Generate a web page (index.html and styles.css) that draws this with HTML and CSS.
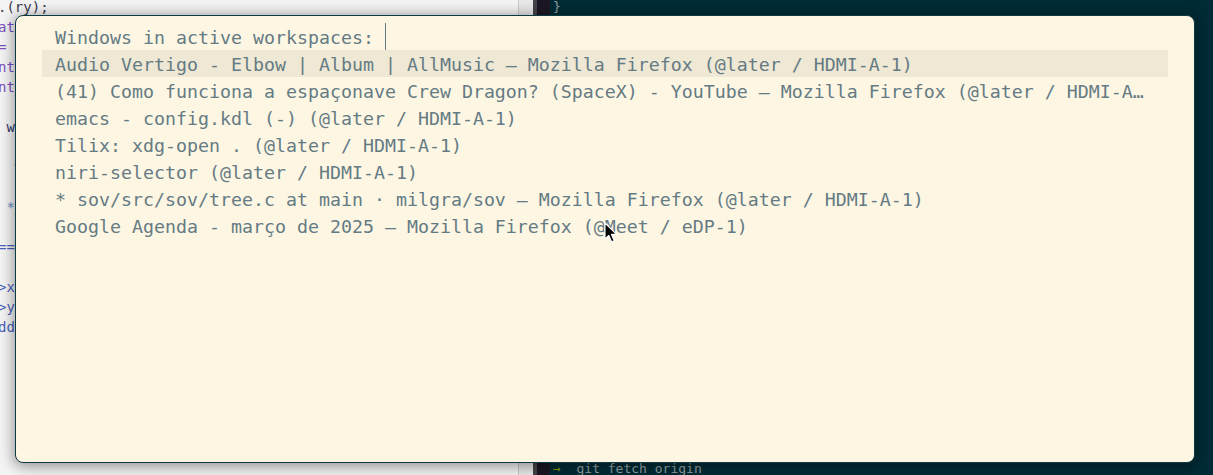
FILE: index.html
```html
<!DOCTYPE html>
<html>
<head>
<meta charset="utf-8">
<link rel="stylesheet" href="styles.css">
</head>
<body>
<div class="desktop">
  <div class="editor">
    <div class="code">
      <div class="ln dark">.(ry);</div>
      <div class="ln purple">at</div>
      <div class="ln purple">= a</div>
      <div class="ln purple">nt_</div>
      <div class="ln purple">nt_</div>
      <div class="ln"></div>
      <div class="ln navy">&nbsp;wi</div>
      <div class="ln"></div>
      <div class="ln dark">&nbsp;&nbsp;w</div>
      <div class="ln"></div>
      <div class="ln light">&nbsp;*</div>
      <div class="ln"></div>
      <div class="ln blue">==</div>
      <div class="ln"></div>
      <div class="ln blue">&gt;x</div>
      <div class="ln blue">&gt;y</div>
      <div class="ln blue">ddo</div>
    </div>
    <div class="scrollbar"></div>
  </div>
  <div class="split"></div>
  <div class="terminal">
    <div class="tline">}</div>
    <div class="tline"><span class="arrow">→</span>  git fetch origin</div>
  </div>

  <div class="popup">
    <div class="prompt">Windows in active workspaces: <span class="caret"></span></div>
    <ul class="list">
      <li class="row selected">Audio Vertigo - Elbow | Album | AllMusic — Mozilla Firefox (@later / HDMI-A-1)</li>
      <li class="row">(41) Como funciona a espaçonave Crew Dragon? (SpaceX) - YouTube — Mozilla Firefox (@later / HDMI-A-1)</li>
      <li class="row">emacs - config.kdl (-) (@later / HDMI-A-1)</li>
      <li class="row">Tilix: xdg-open . (@later / HDMI-A-1)</li>
      <li class="row">niri-selector (@later / HDMI-A-1)</li>
      <li class="row">* sov/src/sov/tree.c at main · milgra/sov — Mozilla Firefox (@later / HDMI-A-1)</li>
      <li class="row">Google Agenda - março de 2025 — Mozilla Firefox (@Meet / eDP-1)</li>
    </ul>
  </div>

  <svg class="pointer" width="14" height="22" viewBox="0 0 14 22">
    <path d="M1 1 L1 17 L4.8 13.4 L7.6 19.8 L10.2 18.7 L7.4 12.4 L12.6 12.4 Z" fill="#000" stroke="#fff" stroke-width="1.1" stroke-linejoin="round"/>
  </svg>
</div>
</body>
</html>
```

FILE: styles.css
```css
html, body {
  margin: 0;
  padding: 0;
}
body {
  width: 1213px;
  height: 475px;
  overflow: hidden;
  background: #002b36;
}
.desktop {
  position: relative;
  display: flex;
  width: 1213px;
  height: 475px;
  overflow: hidden;
}
.editor {
  display: flex;
  width: 533px;
  flex: none;
  background: #f4f4f4;
}
.code {
  flex: 1;
  margin-top: -3px;
  margin-left: -2px;
  font-family: "DejaVu Sans Mono", monospace;
  font-size: 14px;
  line-height: 20px;
}
.ln {
  height: 20px;
  white-space: pre;
}
.dark { color: #3a3a4a; }
.purple { color: #7b50c0; }
.navy { color: #2d3a6b; }
.light { color: #6a8cc8; }
.blue { color: #4a62b8; }
.scrollbar {
  width: 14px;
  border-left: 1px solid #c9c9c9;
  background: #e8e8e8;
}
.split {
  width: 13px;
  flex: none;
  border-left: 4px solid #444448;
  background: #1c1724;
}
.terminal {
  flex: 1;
  display: flex;
  flex-direction: column;
  justify-content: space-between;
  padding: 0 0 0 3px;
  background: #002b36;
  font-family: "DejaVu Sans Mono", monospace;
  font-size: 13px;
  line-height: 15px;
  color: #93a1a1;
}
.tline {
  white-space: pre;
}
.tline:first-child {
  margin-top: -1px;
}
.tline:last-child {
  margin-bottom: -1px;
}
.arrow {
  color: #859900;
}

.popup {
  position: absolute;
  left: 15px;
  top: 15px;
  width: 1180px;
  height: 448px;
  box-sizing: border-box;
  border: 1px solid #0b3a44;
  border-radius: 8px;
  background: #fdf6e3;
  box-shadow: 0 2px 14px 2px rgba(0, 0, 0, 0.38);
  padding: 7px 26px 0 26px;
  font-family: "DejaVu Sans Mono", monospace;
  font-size: 18.27px;
  line-height: 27px;
  color: #657b83;
}
.prompt {
  box-sizing: border-box;
  height: 27px;
  padding: 1px 0 0 13px;
  white-space: pre;
  overflow: hidden;
}
.caret {
  display: inline-block;
  width: 1px;
  height: 27px;
  margin-top: -1px;
  vertical-align: top;
  background: #657b83;
}
.list {
  list-style: none;
  margin: 0;
  padding: 0;
}
.row {
  box-sizing: border-box;
  height: 27px;
  padding: 1px 20px 0 13px;
  white-space: nowrap;
  overflow: hidden;
  text-overflow: ellipsis;
}
.row.selected {
  background: #eee8d5;
}
.pointer {
  position: absolute;
  left: 604px;
  top: 222px;
}
```
